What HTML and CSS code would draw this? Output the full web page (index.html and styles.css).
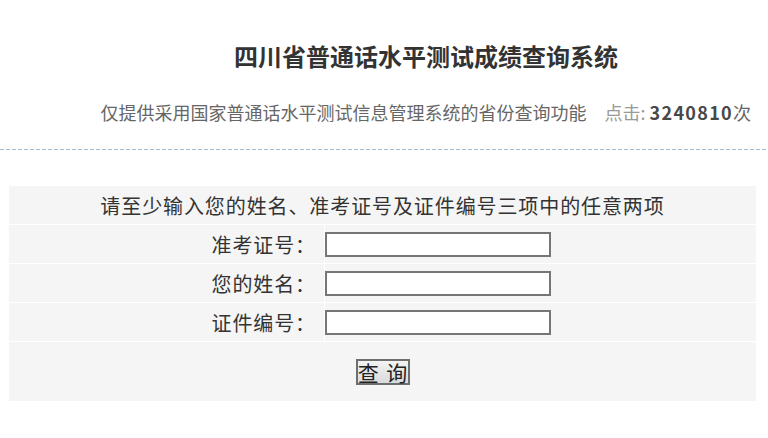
FILE: index.html
```html
<!DOCTYPE html>
<html lang="zh-CN">
<head>
<meta charset="utf-8">
<title>四川省普通话水平测试成绩查询系统</title>
<link rel="stylesheet" href="styles.css">
</head>
<body>
<header class="header">
  <h1 class="title">四川省普通话水平测试成绩查询系统</h1>
  <p class="subtitle">仅提供采用国家普通话水平测试信息管理系统的省份查询功能<span class="hits"><span class="hits-label">点击: </span><b class="hits-num">3240810</b>次</span></p>
</header>
<div class="divider"></div>
<form class="query">
  <div class="cell cell-wide notice">请至少输入您的姓名、准考证号及证件编号三项中的任意两项</div>
  <label class="cell label" for="zkzh">准考证号：</label>
  <div class="cell field"><input id="zkzh" class="input" type="text"></div>
  <label class="cell label" for="xm">您的姓名：</label>
  <div class="cell field"><input id="xm" class="input" type="text"></div>
  <label class="cell label" for="zjbh">证件编号：</label>
  <div class="cell field"><input id="zjbh" class="input" type="text"></div>
  <div class="cell cell-wide actions"><button class="btn" type="button">查 询</button></div>
</form>
</body>
</html>
```

FILE: styles.css
```css
* { box-sizing: border-box; }
html, body { margin: 0; padding: 0; background: #fff; }
body {
  font-family: "Microsoft YaHei", "Noto Sans CJK SC", "Noto Sans", sans-serif;
  color: #333;
  width: 768px;
}
.header { padding-top: 40px; }
.title {
  margin: 0;
  padding-left: 84px;
  text-align: center;
  font-size: 24px;
  line-height: 32px;
  font-weight: bold;
  color: #333;
}
.subtitle {
  margin: 28px 0 0;
  padding-right: 17px;
  text-align: right;
  font-size: 18px;
  line-height: 24px;
  color: #666;
}
.hits { margin-left: 18px; }
.hits-label { color: #999; }
.hits-num { color: #484848; font-weight: bold; letter-spacing: 1.3px; }
.divider {
  margin-top: 25px;
  height: 1px;
  background: repeating-linear-gradient(90deg, #a3bccf 0 4px, transparent 4px 6px);
}
.query {
  margin: 35px 0 0 8px;
  width: 749px;
  display: grid;
  grid-template-columns: 315px 1fr;
  gap: 1px;
  padding: 1px;
  background: #fff;
}
.cell {
  background: #f5f5f5;
  height: 38px;
  display: flex;
  align-items: center;
  font-size: 20px;
  color: #333;
  letter-spacing: 0.9px;
}
.cell-wide { grid-column: 1 / -1; justify-content: center; }
.label { justify-content: flex-end; padding-right: 8px; }
.field { padding-left: 0; }
.input {
  width: 226px;
  height: 25px;
  border: 2px solid #767676;
  background: #fff;
  padding: 0 4px;
  font: inherit;
  font-size: 16px;
  letter-spacing: 0;
}
.actions { height: 59px; }
.btn {
  width: 54px;
  height: 26px;
  padding: 0;
  border: 2px solid #6e6e6e;
  background: linear-gradient(#f3f3f3, #dadada);
  font-family: inherit;
  font-size: 21px;
  line-height: 20px;
  letter-spacing: 0;
  word-spacing: 3px;
  color: #222;
  white-space: nowrap;
}
```
